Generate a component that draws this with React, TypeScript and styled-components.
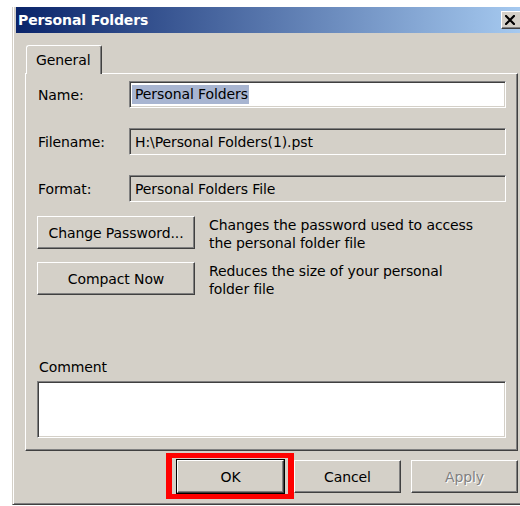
import React from 'react'
import styled, { createGlobalStyle, css } from 'styled-components'

const FACE = '#d4d0c8'
const SHADOW = '#808080'
const DARK = '#404040'

const GlobalStyle = createGlobalStyle`
  html, body {
    margin: 0;
    padding: 0;
    background: #fff;
    overflow: hidden;
  }
  body {
    width: 520px;
    height: 506px;
    font-family: "DejaVu Sans", Tahoma, sans-serif;
    font-size: 14px;
    letter-spacing: -0.1px;
    color: #000;
  }
`

const raised = css`
  border: 1px solid;
  border-color: #fff ${DARK} ${DARK} #fff;
  box-shadow: inset -1px -1px 0 ${SHADOW};
`

const sunken = css`
  border: 1px solid;
  border-color: ${SHADOW} #fff #fff ${SHADOW};
  box-shadow: inset 1px 1px 0 ${DARK}, inset -1px -1px 0 ${FACE};
`

const Window = styled.div`
  margin: 7px 0 0 12px;
  width: 514px;
  box-sizing: border-box;
  background: ${FACE};
  border-left: 1px solid ${FACE};
  border-bottom: 1px solid ${DARK};
  box-shadow: inset 1px 0 0 #fff, inset 0 -1px 0 ${SHADOW};
  padding: 0 4px 0 3px;
  display: flex;
  flex-direction: column;
`

const TitleBar = styled.div`
  height: 26px;
  display: flex;
  align-items: center;
  justify-content: space-between;
  padding-left: 2px;
  background: linear-gradient(to right, #0a246a, #a6caf0);
  color: #fff;
  font-weight: bold;
  font-size: 14px;
`

const CloseButton = styled.div`
  ${raised};
  width: 22px;
  height: 18px;
  box-sizing: border-box;
  background: ${FACE};
  display: flex;
  align-items: center;
  justify-content: center;
  margin-right: -1px;
  padding-right: 4px;
`

const Body = styled.div`
  padding: 12px 4px 11px 9px;
  display: flex;
  flex-direction: column;
`

const TabStrip = styled.div`
  display: flex;
  height: 28px;
  position: relative;
  z-index: 1;
`

const Tab = styled.div`
  margin-left: 1px;
  width: 76px;
  box-sizing: border-box;
  border-top: 1px solid #fff;
  border-left: 1px solid #fff;
  border-right: 1px solid ${DARK};
  border-top-left-radius: 3px;
  border-top-right-radius: 2px;
  box-shadow: inset -1px 0 0 ${SHADOW};
  background: ${FACE};
  height: 29px;
  padding: 4px 0 0 9px;
  line-height: 20px;
`

const Panel = styled.div`
  height: 378px;
  box-sizing: border-box;
  border: 1px solid;
  border-color: #fff ${DARK} ${DARK} #fff;
  box-shadow: inset -1px -1px 0 ${SHADOW};
  padding: 7px 11px 12px 11px;
  display: flex;
  flex-direction: column;
`

const Fields = styled.div`
  display: grid;
  grid-template-columns: 92px 1fr;
  grid-auto-rows: 27px;
  row-gap: 20px;
  align-items: center;
`

const Label = styled.div`
  padding-left: 1px;
`

const Field = styled.div<{ $readOnly?: boolean }>`
  ${sunken};
  height: 27px;
  box-sizing: border-box;
  background: ${(p) => (p.$readOnly ? FACE : '#fff')};
  display: flex;
  align-items: center;
  padding-left: 5px;
  white-space: nowrap;
  overflow: hidden;
`

const Selected = styled.span`
  background: #a8b5d1;
  padding: 1px 1px 2px 3px;
  margin-left: -3px;
`

const Actions = styled.div`
  margin-top: 14px;
  display: grid;
  grid-template-columns: 158px 1fr;
  grid-auto-rows: 33px;
  column-gap: 14px;
  row-gap: 13px;
`

const Button = styled.div<{ $disabled?: boolean }>`
  ${raised};
  height: 33px;
  box-sizing: border-box;
  background: ${FACE};
  display: flex;
  align-items: center;
  justify-content: center;
  white-space: nowrap;
  color: ${(p) => (p.$disabled ? SHADOW : '#000')};
  text-shadow: ${(p) => (p.$disabled ? '1px 1px 0 #fff' : 'none')};
`

const Description = styled.div`
  line-height: 18px;
`

const CommentBlock = styled.div`
  margin-top: auto;
  display: flex;
  flex-direction: column;
`

const CommentLabel = styled.div`
  padding-left: 2px;
  line-height: 18px;
  margin-bottom: 5px;
`

const CommentBox = styled.div`
  ${sunken};
  height: 57px;
  box-sizing: border-box;
  background: #fff;
`

const Footer = styled.div`
  margin-top: 9px;
  display: flex;
  justify-content: flex-end;
  gap: 10px;
`

const DialogButton = styled(Button)<{ $default?: boolean }>`
  width: 107px;
  ${(p) =>
    p.$default &&
    css`
      outline: 1px solid #000;
      outline-offset: 0;
    `}
`

const Callout = styled.div`
  position: relative;
  display: flex;
`

const CalloutFrame = styled.div`
  position: absolute;
  left: -11px;
  right: -10px;
  top: -7px;
  bottom: -6px;
  border-style: solid;
  border-color: #ff0000;
  border-width: 5px 6px;
  pointer-events: none;
`

const CloseIcon = () => (
  <svg width="10" height="10" viewBox="0 0 10 10">
    <path d="M1 1 L9 9 M9 1 L1 9" stroke="#000" strokeWidth="2.2" strokeLinecap="square" />
  </svg>
)

export default function App() {
  return (
    <>
      <GlobalStyle />
      <Window>
        <TitleBar>
          <span>Personal Folders</span>
          <CloseButton>
            <CloseIcon />
          </CloseButton>
        </TitleBar>
        <Body>
          <TabStrip>
            <Tab>General</Tab>
          </TabStrip>
          <Panel>
            <Fields>
              <Label>Name:</Label>
              <Field>
                <Selected>Personal Folders</Selected>
              </Field>
              <Label>Filename:</Label>
              <Field $readOnly>H:\Personal Folders(1).pst</Field>
              <Label>Format:</Label>
              <Field $readOnly>Personal Folders File</Field>
            </Fields>
            <Actions>
              <Button>Change Password...</Button>
              <Description>
                Changes the password used to access
                <br />
                the personal folder file
              </Description>
              <Button>Compact Now</Button>
              <Description>
                Reduces the size of your personal
                <br />
                folder file
              </Description>
            </Actions>
            <CommentBlock>
              <CommentLabel>Comment</CommentLabel>
              <CommentBox />
            </CommentBlock>
          </Panel>
          <Footer>
            <Callout>
              <DialogButton $default>OK</DialogButton>
              <CalloutFrame />
            </Callout>
            <DialogButton>Cancel</DialogButton>
            <DialogButton $disabled>Apply</DialogButton>
          </Footer>
        </Body>
      </Window>
    </>
  )
}
